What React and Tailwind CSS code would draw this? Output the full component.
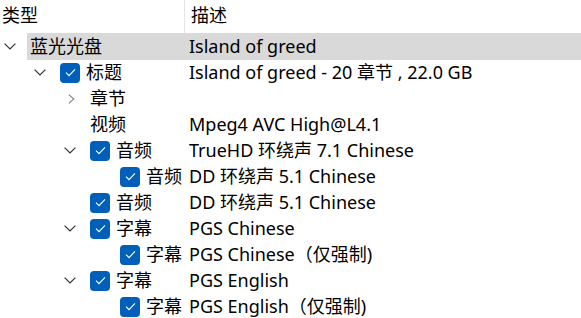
const ROWS = [
  { level: 0, expand: 'down', label: '蓝光光盘', desc: 'Island of greed', selected: true },
  { level: 1, expand: 'down', check: true, label: '标题', desc: 'Island of greed - 20 章节 , 22.0 GB' },
  { level: 2, expand: 'right', label: '章节', desc: '' },
  { level: 2, label: '视频', desc: 'Mpeg4 AVC High@L4.1' },
  { level: 2, expand: 'down', check: true, label: '音频', desc: 'TrueHD 环绕声 7.1 Chinese' },
  { level: 3, check: true, label: '音频', desc: 'DD 环绕声 5.1 Chinese' },
  { level: 2, check: true, label: '音频', desc: 'DD 环绕声 5.1 Chinese' },
  { level: 2, expand: 'down', check: true, label: '字幕', desc: 'PGS Chinese' },
  { level: 3, check: true, label: '字幕', desc: 'PGS Chinese（仅强制)' },
  { level: 2, expand: 'down', check: true, label: '字幕', desc: 'PGS English' },
  { level: 3, check: true, label: '字幕', desc: 'PGS English（仅强制)' },
]

const INDENT = ['pl-0', 'pl-[30px]', 'pl-[60px]', 'pl-[90px]']

function Down() {
  return (
    <svg width="12" height="7" viewBox="0 0 12 7" fill="none" className="ml-[4px]">
      <path d="M0.6 0.6 L6 6 L11.4 0.6" stroke="#333" strokeWidth="1.2" />
    </svg>
  )
}

function Right() {
  return (
    <svg width="7" height="10" viewBox="0 0 7 10" fill="none" className="ml-[8px]">
      <path d="M0.8 0.6 L5.8 5 L0.8 9.4" stroke="#8a8a8a" strokeWidth="1.2" />
    </svg>
  )
}

function Check() {
  return (
    <span className="mr-[6px] flex h-[20px] w-[20px] shrink-0 items-center justify-center rounded-[4px] bg-[#005fb8]">
      <svg width="11" height="9" viewBox="0 0 11 9" fill="none">
        <path d="M1 4.6 L4 7.6 L10 1.4" stroke="white" strokeWidth="1.1" />
      </svg>
    </span>
  )
}

function Row({ row }) {
  const bg = row.selected ? 'bg-[#d9d9d9]' : ''
  return (
    <div className="grid h-[26px] grid-cols-[188px_1fr]">
      <div className={`flex items-center ${INDENT[row.level]}`}>
        <span className="flex w-[27px] shrink-0 items-center">
          {row.expand === 'down' && <Down />}
          {row.expand === 'right' && <Right />}
        </span>
        <div className={`flex h-full flex-1 items-center whitespace-nowrap pl-[3px] ${bg}`}>
          {row.check && <Check />}
          <span>{row.label}</span>
        </div>
      </div>
      <div className={`flex items-center whitespace-nowrap pl-px ${bg}`}>{row.desc}</div>
    </div>
  )
}

export default function App() {
  return (
    <div
      className="h-[318px] w-[581px] overflow-hidden bg-white text-[18px] text-black"
      style={{ fontFamily: '"Noto Sans", "Noto Sans CJK SC", sans-serif' }}
    >
      <div className="grid h-[33px] grid-cols-[185px_1fr]">
        <div className="flex items-center border-r border-[#e5e5e5] pb-[2px] pl-[2px]">类型</div>
        <div className="flex items-center pb-[2px] pl-[6px]">描述</div>
      </div>
      {ROWS.map((r, i) => (
        <Row key={i} row={r} />
      ))}
    </div>
  )
}
